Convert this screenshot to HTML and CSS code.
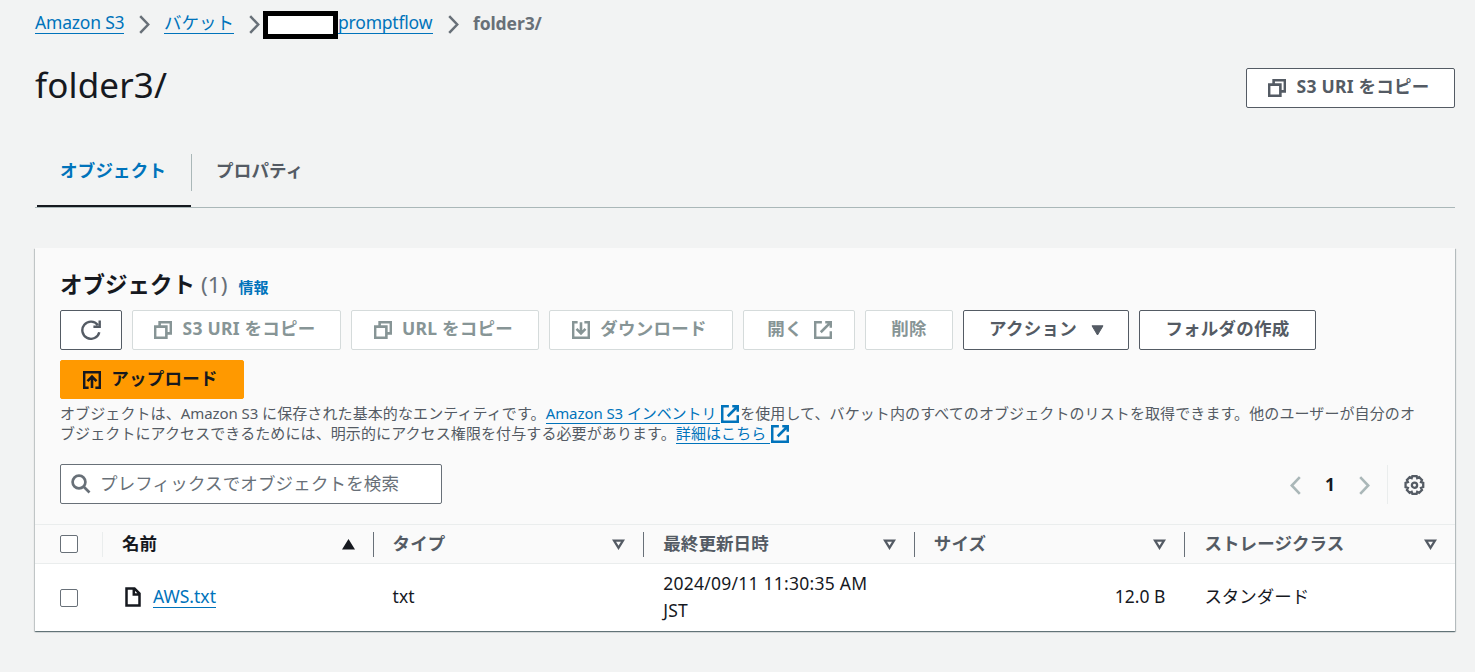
FILE: index.html
```html
<!DOCTYPE html>
<html lang="ja">
<head>
    <meta charset="UTF-8">
    <meta name="viewport" content="width=device-width, initial-scale=1.0">
    <title>folder3/ - S3</title>
    <link rel="stylesheet" href="styles.css">
</head>
<body>
    <!-- shared icons -->
    <svg class="sprite" width="0" height="0">
        <symbol id="i-copy" viewBox="0 0 16 16"><path d="M1 5h10v10H1zM5 5V1h10v10h-4"/></symbol>
        <symbol id="i-external" viewBox="0 0 16 16"><path d="M7 1H1v14h14V9M10 1h5v5M15 1 6 10"/></symbol>
        <symbol id="i-download" viewBox="0 0 16 16"><path d="M5 1H1v14h14V1h-4M8 1v9.5M4 7l4 4 4-4"/></symbol>
        <symbol id="i-upload" viewBox="0 0 16 16"><path d="M5 15H1V1h14v14h-4M8 15V5.5M4 9l4-4 4 4"/></symbol>
        <symbol id="i-chevron" viewBox="0 0 11 19"><path d="M1.2 1.2l8 8.3-8 8.3"/></symbol>
        <symbol id="i-sort" viewBox="0 0 13 11"><path d="M2 1.6h9L6.5 8.8z"/></symbol>
    </svg>

    <nav class="breadcrumb">
        <a href="#" class="bc-home">Amazon S3</a>
        <svg class="chev"><use href="#i-chevron"/></svg>
        <a href="#" class="bc-bucket">バケット</a>
        <svg class="chev"><use href="#i-chevron"/></svg>
        <span class="mask"></span>
        <a href="#" class="bc-name">promptflow</a>
        <svg class="chev"><use href="#i-chevron"/></svg>
        <b>folder3/</b>
    </nav>

    <header class="page-header">
        <h1>folder3/</h1>
        <button class="btn copy"><svg class="icon"><use href="#i-copy"/></svg><span>S3 URI をコピー</span></button>
    </header>

    <div class="tabs">
        <a class="tab active">オブジェクト</a>
        <a class="tab">プロパティ</a>
    </div>

    <section class="card">
        <div class="card-top">
            <h2>オブジェクト <span class="count">(1)</span> <a class="info">情報</a></h2>
            <div class="actions">
                <button class="btn refresh">
                    <svg class="icon-lg" viewBox="0 0 20 20"><path d="M18.3 12.2A8.6 8.6 0 1 1 16.8 5M18.7 .5v6.300h-6.300"/></svg>
                </button>
                <button class="btn copy" disabled><svg class="icon"><use href="#i-copy"/></svg><span>S3 URI をコピー</span></button>
                <button class="btn copy-url" disabled><svg class="icon"><use href="#i-copy"/></svg><span>URL をコピー</span></button>
                <button class="btn download" disabled><svg class="icon"><use href="#i-download"/></svg><span>ダウンロード</span></button>
                <button class="btn open" disabled><span>開く</span><svg class="icon"><use href="#i-external"/></svg></button>
                <button class="btn delete" disabled><span>削除</span></button>
                <button class="btn menu"><span>アクション</span><svg class="caret" viewBox="0 0 13 11"><path d="M1 .8h11L6.5 10z"/></svg></button>
                <button class="btn create"><span>フォルダの作成</span></button>
                <button class="btn upload"><svg class="icon"><use href="#i-upload"/></svg><span>アップロード</span></button>
            </div>
            <p class="description">オブジェクトは、<span class="latin">Amazon S3 </span>に保存された基本的なエンティティです。<a href="#" class="inventory"><span class="latin">Amazon S3 </span>インベントリ </a><svg class="icon ext"><use href="#i-external"/></svg>を使用して、バケット内のすべてのオブジェクトのリストを取得できます。他のユーザーが自分のオ<br>ブジェクトにアクセスできるためには、明示的にアクセス権限を付与する必要があります。<a href="#">詳細はこちら </a><svg class="icon ext"><use href="#i-external"/></svg></p>
            <div class="tools">
                <div class="search">
                    <svg viewBox="0 0 20 20"><circle cx="8" cy="8" r="6.4"/><path d="M12.5 12.5l6 6"/></svg>
                    <input type="text" placeholder="プレフィックスでオブジェクトを検索">
                </div>
                <div class="pager">
                    <svg class="page-arrow prev"><use href="#i-chevron"/></svg>
                    <b>1</b>
                    <svg class="page-arrow"><use href="#i-chevron"/></svg>
                    <span class="settings">
                        <svg viewBox="0 0 20 20"><path d="M8 1h4l.6 2 1.800-.9 2.700 2.700-.9 1.900 2.100.8v4l-2.100.8.9 2-2.700 2.600-1.800-.9-.6 2H8l-.7-2-1.900.9-2.600-2.600.9-2L1.500 11.500v-4l2.200-.8-.9-1.900 2.600-2.700 1.900.9z"/><circle cx="10" cy="9.700" r="2.500"/></svg>
                    </span>
                </div>
            </div>
        </div>

        <table>
            <colgroup><col class="col-check"><col><col><col><col><col></colgroup>
            <thead>
                <tr>
                    <th><span class="check"></span></th>
                    <th class="sorted"><div>名前<svg class="sort up"><use href="#i-sort"/></svg></div></th>
                    <th><div>タイプ<svg class="sort"><use href="#i-sort"/></svg></div></th>
                    <th><div>最終更新日時<svg class="sort"><use href="#i-sort"/></svg></div></th>
                    <th><div>サイズ<svg class="sort"><use href="#i-sort"/></svg></div></th>
                    <th><div>ストレージクラス<svg class="sort"><use href="#i-sort"/></svg></div></th>
                </tr>
            </thead>
            <tbody>
                <tr>
                    <td><span class="check"></span></td>
                    <td><div class="file"><svg viewBox="0 0 16 20"><path d="M1.5 1.5h8l5 5v12h-13zM8.8 1.5v6h5.7"/></svg><a href="#">AWS.txt</a></div></td>
                    <td>txt</td>
                    <td class="date">2024/09/11 11:30:35 AM<br>JST</td>
                    <td class="size">12.0 B</td>
                    <td>スタンダード</td>
                </tr>
            </tbody>
        </table>
    </section>
</body>
</html>
```
FILE: styles.css
```css
* {
    box-sizing: border-box;
}
body {
    margin: 0;
    padding: 0 20px 0 35px;
    height: 672px;
    background-color: #f2f3f3;
    color: #16191f;
    font-family: "Noto Sans", "Noto Sans CJK JP", sans-serif;
    font-size: 17.5px;
    line-height: 27px;
    overflow: hidden;
}
svg {
    fill: none;
    stroke: currentColor;
    stroke-width: 2;
    flex: none;
}
.sprite {
    position: absolute;
}
a {
    color: #0073bb;
    text-decoration: none;
}
.icon {
    width: 18px;
    height: 18px;
}

/* breadcrumb */
.breadcrumb {
    display: flex;
    align-items: center;
    height: 46px;
    white-space: nowrap;
}
.breadcrumb a {
    border-bottom: 1px solid #0073bb;
    line-height: 21px;
    letter-spacing: -0.2px;
}
.breadcrumb b {
    color: #687078;
    letter-spacing: -0.1px;
}
.bc-home {
    width: 89px;
}
.breadcrumb .bc-bucket {
    width: 70px;
    letter-spacing: 0;
}
.bc-name {
    width: 95px;
}
.chev {
    width: 11px;
    height: 19px;
    margin: 2px 14px 0 15px;
    color: #687078;
    stroke-width: 2.5;
}
.bc-bucket + .chev {
    margin-right: 3px;
}
.mask {
    width: 75px;
    height: 28px;
    margin-top: 4px;
    background-color: #fff;
    border: 5px solid #000;
}

/* page title */
.page-header {
    display: flex;
    justify-content: space-between;
    align-items: flex-start;
    height: 108px;
}
h1 {
    margin: 14px 0 0;
    font-size: 35px;
    font-weight: 400;
    letter-spacing: 0.15px;
    line-height: 50px;
}
.page-header .btn {
    margin-top: 22px;
}

/* buttons */
.btn {
    display: flex;
    justify-content: center;
    align-items: center;
    height: 40px;
    padding: 0;
    background-color: #fff;
    border: 1px solid #545b64;
    border-radius: 2px;
    color: #545b64;
    font-family: inherit;
    font-size: 17.5px;
    font-weight: 700;
    line-height: 25px;
    white-space: nowrap;
}
.btn span {
    margin-top: -3px;
    letter-spacing: 0.25px;
}
.btn .icon {
    margin-right: 10px;
    margin-left: -3px;
    stroke-width: 2.3;
}
.btn:disabled {
    border-color: #d5dbdb;
    color: #879596;
}
.btn.refresh {
    width: 62px;
}
.icon-lg {
    width: 20px;
    height: 20px;
    stroke-width: 2.4;
}
.btn.copy {
    width: 209px;
}
.btn.copy-url {
    width: 188px;
}
.btn.download {
    width: 184px;
}
.btn.open {
    width: 112px;
}
.btn.open .icon {
    margin: 0 -1px 0 11px;
}
.btn.delete {
    width: 88px;
}
.btn.menu {
    width: 166px;
}
.caret {
    width: 13px;
    height: 11px;
    margin: 1px -1px 0 14px;
    fill: currentColor;
    stroke-width: 1;
}
.btn.create {
    width: 177px;
}
.btn.upload {
    width: 184px;
    height: 39px;
    background-color: #ff9900;
    border-color: #ff9900;
    color: #16191f;
}

/* tabs */
.tabs {
    display: flex;
    height: 54px;
    border-bottom: 1px solid #aab7b8;
}
.tab {
    position: relative;
    padding: 3px 25px 0;
    color: #545b64;
    font-weight: 700;
    letter-spacing: 0.2px;
    white-space: nowrap;
}
.tab.active {
    width: 156px;
    color: #0073bb;
}
.tab.active::before {
    content: "";
    position: absolute;
    left: 2px;
    right: 0;
    bottom: 0;
    height: 2px;
    background-color: #16191f;
}
.tab.active::after {
    content: "";
    position: absolute;
    right: -1px;
    top: 0;
    height: 37px;
    border-right: 1px solid #aab7b8;
}

/* objects card */
.card {
    margin-top: 40px;
    background-color: #fff;
    box-shadow: 0 1px 1px rgba(0, 28, 36, 0.4), 1px 1px 1px rgba(0, 28, 36, 0.2), -1px 1px 1px rgba(0, 28, 36, 0.15);
}
.card-top {
    height: 276px;
    padding: 22px 25px 0;
    background-color: #fafafa;
}
h2 {
    display: flex;
    align-items: baseline;
    margin: 0;
    height: 40px;
    font-size: 22.5px;
    line-height: 30px;
}
.count {
    margin-left: 6px;
    color: #687078;
    font-weight: 400;
}
.info {
    margin-left: 11px;
    font-size: 15px;
}
.actions {
    display: flex;
    flex-wrap: wrap;
    gap: 10px;
}
.description {
    margin: 4px -20px 0 0;
    color: #545b64;
    font-size: 15px;
    letter-spacing: 0.1px;
    line-height: 20px;
    height: 61px;
    white-space: nowrap;
}
.description a {
    border-bottom: 1px solid #0073bb;
}
.latin {
    letter-spacing: -0.08px;
}
.description .inventory {
    letter-spacing: -0.1px;
}
.ext {
    color: #0073bb;
    stroke-width: 2.4;
    vertical-align: -4px;
    margin: -4px 1px 0;
}
.tools {
    display: flex;
    justify-content: space-between;
}
.search {
    display: flex;
    align-items: center;
    width: 382px;
    height: 40px;
    padding-left: 10px;
    background-color: #fff;
    border: 1px solid #687078;
    border-radius: 2px;
}
.search svg {
    width: 20px;
    height: 20px;
    color: #687078;
    stroke-width: 2.7;
}
.search input {
    flex: 1;
    min-width: 0;
    padding: 0 0 3px 9px;
    border: none;
    outline: none;
    background: none;
    font-family: inherit;
    font-size: 17.5px;
    letter-spacing: 0.15px;
}
.search input::placeholder {
    color: #687078;
}
.pager {
    display: flex;
    align-items: center;
    height: 40px;
    margin-right: 5px;
}
.pager b {
    width: 58px;
    text-align: center;
}
.page-arrow {
    width: 11px;
    height: 19px;
    margin-top: 2px;
    color: #aab7b8;
    stroke-width: 2.6;
}
.prev {
    transform: scaleX(-1);
}
.settings {
    display: flex;
    align-items: center;
    height: 39px;
    margin-left: 17px;
    padding-left: 16px;
    border-left: 1px solid #eaeded;
}
.settings svg {
    width: 21px;
    height: 21px;
    margin-top: 3px;
    color: #545b64;
    stroke-width: 2.2;
}

/* table */
table {
    width: 1420px;
    table-layout: fixed;
    border-collapse: separate;
    border-spacing: 0;
}
.col-check {
    width: 67px;
}
th {
    height: 40px;
    padding: 0;
    background-color: #fafafa;
    border-top: 1px solid #eaeded;
    border-bottom: 1px solid #eaeded;
    color: #545b64;
    text-align: left;
    letter-spacing: 0.1px;
}
th div {
    display: flex;
    justify-content: space-between;
    align-items: center;
    height: 25px;
    padding: 0 18px 2px 19px;
    border-left: 1px solid #687078;
    line-height: 24px;
}
th.sorted {
    color: #16191f;
}
th.sorted div {
    border-color: #eaeded;
}
.sort {
    width: 13px;
    height: 11px;
    margin-top: 3px;
    stroke-width: 2.3;
}
.sort.up {
    transform: scaleY(-1);
    fill: currentColor;
}
td {
    height: 67px;
    padding: 0 19px 2px 20px;
}
th:first-child, td:first-child {
    padding-left: 25px;
}
td:first-child {
    padding-bottom: 0;
}
.check {
    display: block;
    width: 18px;
    height: 18px;
    background-color: #fff;
    border: 1px solid #687078;
    border-radius: 2px;
}
.file {
    display: flex;
    align-items: center;
    gap: 12px;
    padding-left: 3px;
}
.file svg {
    width: 16px;
    height: 20px;
    margin-top: 1px;
    stroke-width: 2.5;
}
.file a {
    line-height: 21px;
    border-bottom: 1px solid #0073bb;
}
.date {
    letter-spacing: 0.25px;
    white-space: nowrap;
}
.size {
    text-align: right;
}
```
